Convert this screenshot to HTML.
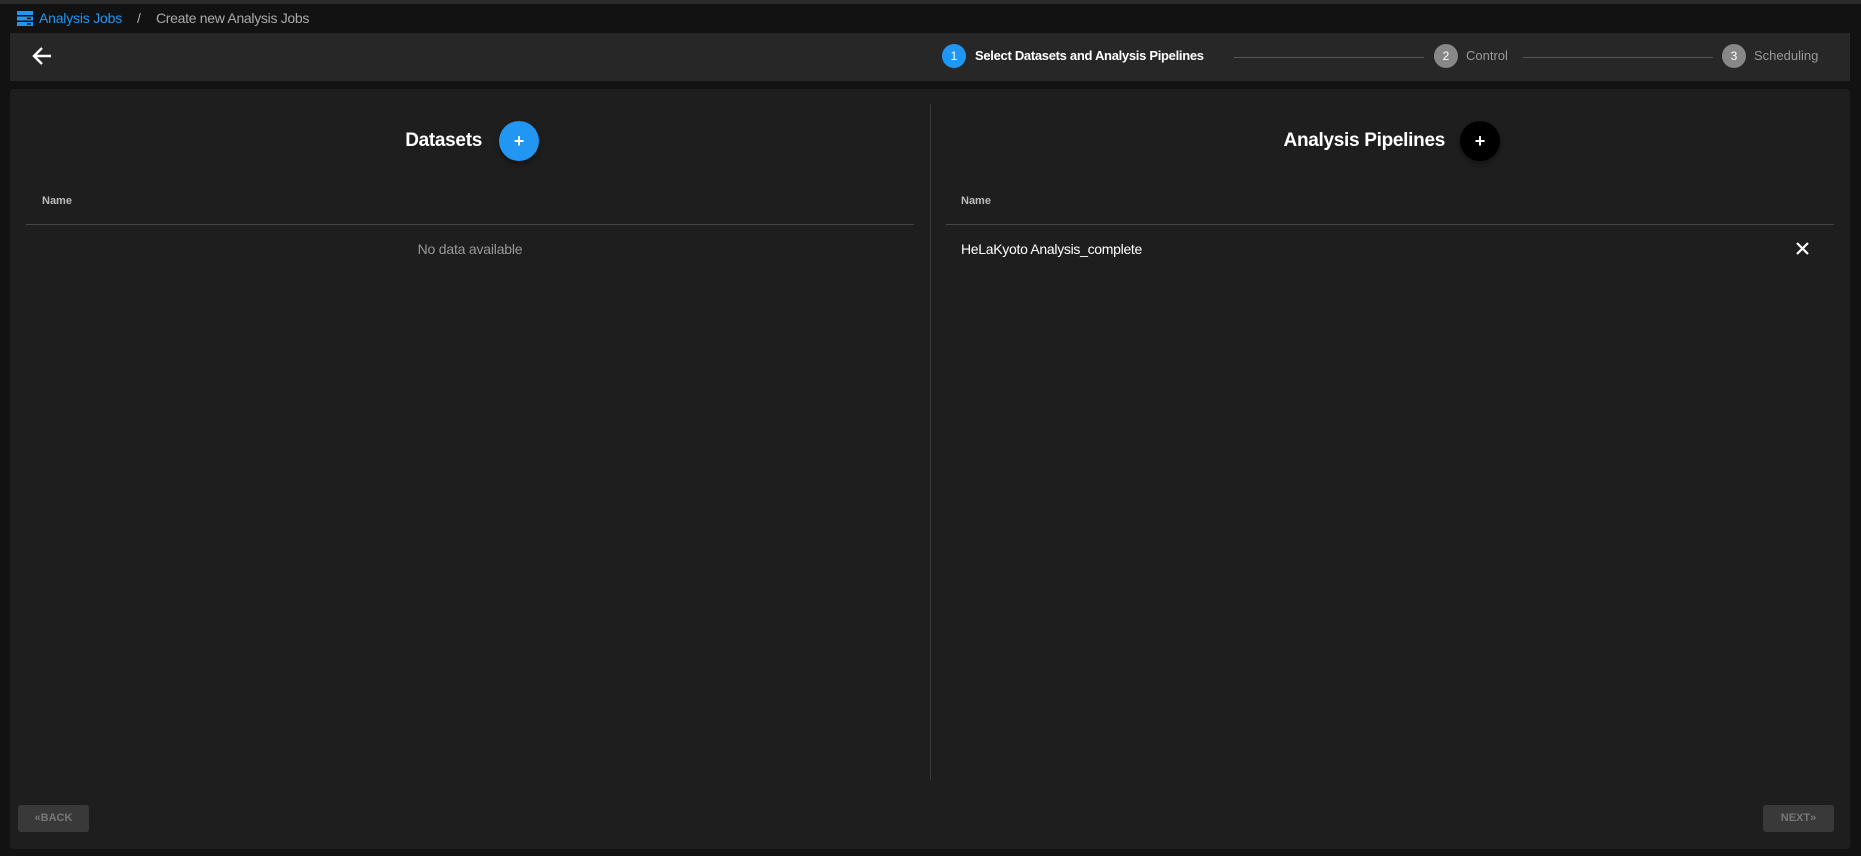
<!DOCTYPE html>
<html><head><meta charset="utf-8"><style>
*{box-sizing:border-box;margin:0;padding:0}
body{width:1861px;height:856px;background:#121212;font-family:"Liberation Sans",sans-serif;position:relative;overflow:hidden;color:#fff}
.a{position:absolute}
.circ{position:absolute;width:24px;height:24px;border-radius:50%;font-size:12px;text-align:center;line-height:24px;color:#fff}
</style></head><body>
<div class="a" style="left:0;top:0;width:1861px;height:4px;background:#2a2a2a"></div>
<svg class="a" style="left:17px;top:11px" width="16" height="15" viewBox="0 0 16 15"><rect x="0" y="0" width="16" height="4" fill="#2196f3"/><rect x="0" y="5.5" width="16" height="4" fill="#2196f3"/><rect x="0" y="11" width="16" height="4" fill="#2196f3"/><rect x="10" y="6.7" width="4" height="1.5" fill="#121212"/><rect x="10" y="12.2" width="4" height="1.5" fill="#121212"/></svg>
<div class="a" style="left:39px;top:10px;font-size:14px;color:#2196f3;letter-spacing:-0.2px">Analysis Jobs</div>
<div class="a" style="left:137px;top:10px;font-size:14px;color:#aaa">/</div>
<div class="a" style="left:156px;top:10px;font-size:14px;color:#aaa;letter-spacing:-0.3px">Create new Analysis Jobs</div>

<div class="a" style="left:10px;top:33px;width:1840px;height:48px;background:#272727"></div>
<svg class="a" style="left:31px;top:46px" width="22" height="20" viewBox="0 0 22 20"><path d="M20 10H3M11 2L3 10l8 8" stroke="#fff" stroke-width="2.4" fill="none"/></svg>
<div class="circ" style="left:942px;top:44px;background:#2196f3">1</div>
<div class="a" style="left:975px;top:48px;font-size:13px;font-weight:bold;letter-spacing:-0.3px">Select Datasets and Analysis Pipelines</div>
<div class="a" style="left:1234px;top:57px;width:190px;height:1px;background:#555"></div>
<div class="circ" style="left:1434px;top:44px;background:#888">2</div>
<div class="a" style="left:1466px;top:48px;font-size:13px;color:#999">Control</div>
<div class="a" style="left:1523px;top:57px;width:190px;height:1px;background:#555"></div>
<div class="circ" style="left:1722px;top:44px;background:#888">3</div>
<div class="a" style="left:1754px;top:48px;font-size:13px;color:#999">Scheduling</div>

<div class="a" style="left:10px;top:89px;width:1840px;height:760px;background:#1e1e1e;border-radius:4px"></div>
<div class="a" style="left:930px;top:104px;width:1px;height:676px;background:#3a3a3a"></div>

<div class="a" style="right:1379px;top:130px;font-size:19px;font-weight:bold;letter-spacing:-0.3px">Datasets</div>
<div class="a" style="left:499px;top:121px;width:40px;height:40px;border-radius:50%;background:#2196f3;box-shadow:0 3px 6px rgba(0,0,0,.4);text-align:center;line-height:40px;font-size:18px;font-weight:bold">+</div>
<div class="a" style="left:42px;top:195px;font-size:11px;font-weight:bold;color:#bbb">Name</div>
<div class="a" style="left:26px;top:224px;width:888px;height:1px;background:#444"></div>
<div class="a" style="left:26px;top:241px;width:888px;text-align:center;font-size:14px;color:#999;letter-spacing:-0.2px">No data available</div>

<div class="a" style="right:416px;top:130px;font-size:19px;font-weight:bold;letter-spacing:-0.3px">Analysis Pipelines</div>
<div class="a" style="left:1460px;top:121px;width:40px;height:40px;border-radius:50%;background:#000;box-shadow:0 3px 6px rgba(0,0,0,.4);text-align:center;line-height:40px;font-size:18px;font-weight:bold">+</div>
<div class="a" style="left:961px;top:195px;font-size:11px;font-weight:bold;color:#bbb">Name</div>
<div class="a" style="left:946px;top:224px;width:888px;height:1px;background:#444"></div>
<div class="a" style="left:961px;top:241px;font-size:14px;letter-spacing:-0.3px">HeLaKyoto Analysis_complete</div>
<svg class="a" style="left:1796px;top:242px" width="13" height="13" viewBox="0 0 13 13"><path d="M1 1l11 11M12 1L1 12" stroke="#fff" stroke-width="2.2"/></svg>

<div class="a" style="left:18px;top:805px;width:71px;height:27px;background:#393939;border-radius:3px;font-size:11px;font-weight:bold;color:#777;text-align:center;line-height:27px">«BACK</div>
<div class="a" style="left:1763px;top:805px;width:71px;height:27px;background:#393939;border-radius:3px;font-size:11px;font-weight:bold;color:#777;text-align:center;line-height:27px">NEXT»</div>
</body></html>
